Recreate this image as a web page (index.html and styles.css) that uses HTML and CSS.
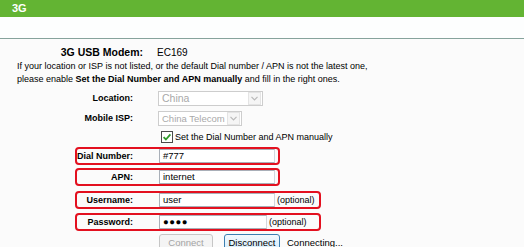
FILE: index.html
```html
<!DOCTYPE html>
<html>
<head>
    <title>3G</title>
    <link rel="stylesheet" href="styles.css">
</head>
<body>
    <div class="title">3G</div>
    <div class="strip"></div>

    <div class="content">
        <div class="row modem">
            <span class="label">3G USB Modem:</span>
            <span class="value">EC169</span>
        </div>

        <p class="note">If your location or ISP is not listed, or the default Dial number / APN is not the latest one,<br>please enable <b>Set the Dial Number and APN manually</b> and fill in the right ones.</p>

        <div class="row">
            <span class="label">Location:</span>
            <div class="select location">
                <span class="option">China</span>
                <span class="arrow"><svg width="7" height="5" viewBox="0 0 7 5"><path d="M0.5 0.8 L3.5 3.8 L6.5 0.8" fill="none" stroke="#b9b9b9" stroke-width="1.2"/></svg></span>
            </div>
        </div>
        <div class="row">
            <span class="label">Mobile ISP:</span>
            <div class="select isp">
                <span class="option">China Telecom</span>
                <span class="arrow"><svg width="7" height="5" viewBox="0 0 7 5"><path d="M0.5 0.8 L3.5 3.8 L6.5 0.8" fill="none" stroke="#b9b9b9" stroke-width="1.2"/></svg></span>
            </div>
        </div>
        <div class="row check-row">
            <svg class="checkbox" width="12" height="12" viewBox="0 0 12 12">
                <rect x="0.5" y="0.5" width="11" height="11" fill="#fff" stroke="#4a4a4a"/>
                <path d="M2.6 6.2 L4.9 8.5 L9.4 3.4" fill="none" stroke="#2f9a2a" stroke-width="1.8"/>
            </svg>
            <span>Set the Dial Number and APN manually</span>
        </div>

        <div class="mark dial">
            <span class="label">Dial Number:</span>
            <div class="field">#777</div>
        </div>
        <div class="mark apn">
            <span class="label">APN:</span>
            <div class="field">internet</div>
        </div>
        <div class="mark wide user">
            <span class="label">Username:</span>
            <div class="field">user</div>
            <span class="optional">(optional)</span>
        </div>
        <div class="mark wide pass">
            <span class="label">Password:</span>
            <div class="field short dots">&#9679;&#9679;&#9679;&#9679;</div>
            <span class="optional">(optional)</span>
        </div>

        <div class="actions">
            <button type="button" class="btn" disabled>Connect</button>
            <button type="button" class="btn active">Disconnect</button>
            <span class="status">Connecting...</span>
        </div>
    </div>
</body>
</html>
```

FILE: styles.css
```css
body {
    margin: 0;
    background: #fbfbfb;
    font-family: "Liberation Sans", Arial, sans-serif;
    font-size: 9px;
    color: #000;
}
.title {
    height: 17px;
    line-height: 17px;
    padding-left: 12px;
    background: #63b433;
    color: #fff;
    font-weight: bold;
    font-size: 11px;
}
.strip {
    height: 21px;
    background: #fdfefe;
    border-bottom: 1px solid #86a39c;
}
.row {
    display: flex;
    align-items: center;
    height: 16px;
    margin-top: 4px;
}
.label {
    flex: none;
    width: 133px;
    text-align: right;
    font-weight: bold;
}
.modem {
    height: 14px;
    margin-top: 6px;
}
.modem .label {
    width: 143px;
    font-size: 10.5px;
}
.modem .value {
    margin-left: 14px;
    font-size: 10px;
}
.note {
    margin: 1px 0 0 17px;
    line-height: 13px;
}
.select {
    display: flex;
    align-items: center;
    height: 15px;
    box-sizing: border-box;
    margin-left: 25px;
    padding-left: 3px;
    border: 1px solid #cdcdcd;
    background: #fff;
    color: #a9a9a9;
    font-size: 9.5px;
    white-space: nowrap;
}
.select.location {
    width: 105px;
    font-size: 10.5px;
}
.select.isp {
    width: 84px;
}
.option {
    flex: none;
}
.arrow {
    flex: none;
    display: flex;
    align-items: center;
    justify-content: center;
    width: 11px;
    height: 11px;
    margin: 0 1px 0 auto;
    border: 1px solid #e4e4e4;
    background: #f5f5f5;
}
.check-row {
    height: 14px;
}
.checkbox {
    margin-left: 161px;
    margin-right: 2px;
}
.mark {
    display: flex;
    align-items: center;
    width: 205px;
    height: 18px;
    box-sizing: border-box;
    margin-left: 75px;
    border: 2px solid #e3101f;
    border-radius: 4px;
}
.mark.wide {
    width: 246px;
}
.mark .label {
    width: 56px;
}
.dial {
    margin-top: 3px;
}
.apn {
    margin-top: 3px;
}
.user {
    margin-top: 5px;
}
.pass {
    margin-top: 4px;
}
.field {
    width: 116px;
    height: 14px;
    box-sizing: border-box;
    margin-left: 26px;
    padding-left: 3px;
    border: 1px solid #a9afb8;
    border-right-color: #d3d7dd;
    background: #fff;
    font-size: 9.5px;
    line-height: 12px;
}
.field.short {
    width: 108px;
}
.dots {
    letter-spacing: 0.5px;
}
.optional {
    margin-left: 2px;
}
.actions {
    display: flex;
    align-items: center;
    margin-top: 3px;
    padding-left: 159px;
}
.btn {
    width: 54px;
    height: 16px;
    padding: 0;
    border: 1px solid #c6c6c6;
    border-radius: 3px;
    background: #f4f4f4;
    color: #a4a4a4;
    font-family: inherit;
    font-size: 9.5px;
}
.btn.active {
    width: 56px;
    margin-left: 11px;
    border-color: #3c7fb1;
    background: linear-gradient(#f3f9fe, #d6edfb);
    color: #000;
}
.status {
    margin-left: 7px;
    font-size: 9.5px;
}
```
